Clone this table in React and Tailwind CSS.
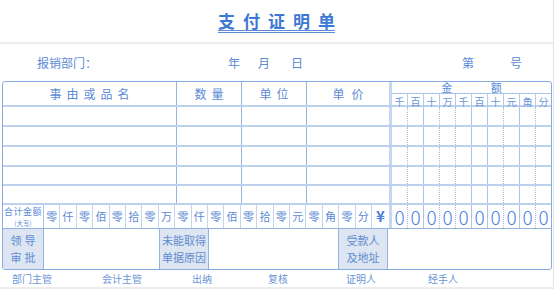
const digits = ["千", "百", "十", "万", "千", "百", "十", "元", "角", "分"]
const daxie = ["零", "仟", "零", "佰", "零", "拾", "零", "万", "零", "仟", "零", "佰", "零", "拾", "零", "元", "零", "角", "零", "分"]
// divider style after each amount cell
const sep = [
  "border-r border-dotted border-[#9fbce6]",
  "border-r border-[#a9c3ea]",
  "border-r border-dotted border-[#9fbce6]",
  "border-r border-dotted border-[#9fbce6]",
  "border-r border-[#a9c3ea]",
  "border-r border-[#a9c3ea]",
  "border-r border-dotted border-[#9fbce6]",
  "border-r border-[#a9c3ea]",
  "border-r border-dotted border-[#9fbce6]",
  "",
]

function AmountCells({ children }) {
  return (
    <div className="w-[162px] flex border-l-[3px] border-[#c6d8f1]">
      {digits.map((d, i) => (
        <div key={i} className={`flex-1 flex items-center justify-center ${sep[i]}`}>
          {children ? children(d, i) : null}
        </div>
      ))}
    </div>
  )
}

export default function App() {
  return (
    <div className="w-[554px] h-[289px] bg-white text-[#5687d4] font-['Noto_Sans_CJK_SC',sans-serif] overflow-hidden border-r border-[#e2e2e2]">
      {/* Title */}
      <div className="h-[42px] flex items-center justify-center pt-[2px]">
        <h1 className="flex gap-[8px] text-[17px] leading-[19px] font-bold text-[#3c78d4] border-b-[3px] border-double border-[#5b8bd8]">
          {["支", "付", "证", "明", "单"].map((c) => (
            <span key={c}>{c}</span>
          ))}
        </h1>
      </div>
      <div className="h-[2px] bg-[#ececec]" />

      {/* Dept / date row */}
      <div className="h-[37px] flex items-center text-[12px] text-[#5b8ad4]">
        <span className="pl-[37px] w-[228px]">报销部门：</span>
        <span className="w-[30px]">年</span>
        <span className="w-[33px]">月</span>
        <span className="w-[171px]">日</span>
        <span className="w-[48px]">第</span>
        <span>号</span>
      </div>

      {/* Table */}
      <div className="ml-[2px] w-[550px] h-[189px] border border-[#86abe0] rounded-[3px] flex flex-col text-[#5b8ad6]">
        {/* header */}
        <div className="h-[25px] flex border-b-2 border-[#bcd1ee] text-[12px]">
          <div className="w-[174px] border-r border-[#93b3e2] flex items-center justify-center tracking-[5px] pl-[5px]">事由或品名</div>
          <div className="w-[65px] border-r border-[#93b3e2] flex items-center justify-center tracking-[5px] pl-[5px]">数量</div>
          <div className="w-[65px] border-r border-[#93b3e2] flex items-center justify-center tracking-[5px] pl-[5px]">单位</div>
          <div className="w-[82px] flex items-center justify-center tracking-[7px] pl-[7px]">单价</div>
          <div className="w-[162px] flex flex-col border-l-[3px] border-[#c6d8f1]">
            <div className="h-[12px] flex items-center justify-around text-[11px] leading-none border-b border-[#a9c3ea] px-[30px]">
              <span>金</span>
              <span>额</span>
            </div>
            <div className="flex-1 flex text-[10px] text-[#6b97d8]">
              {digits.map((d, i) => (
                <div key={i} className={`flex-1 flex items-center justify-center ${i < 9 ? "border-r border-[#b4cbec]" : ""}`}>
                  {d}
                </div>
              ))}
            </div>
          </div>
        </div>

        {/* data rows */}
        {["h-[20px]", "h-[20px]", "h-[20px]", "h-[19px]", "h-[19px]"].map((h, r) => (
          <div key={r} className={`${h} flex border-b-2 border-[#bcd1ee]`}>
            <div className="w-[174px] border-r border-[#93b3e2]" />
            <div className="w-[65px] border-r border-[#93b3e2]" />
            <div className="w-[65px] border-r border-[#93b3e2]" />
            <div className="w-[82px]" />
            <AmountCells />
          </div>
        ))}

        {/* total row */}
        <div className="h-[24px] flex border-b border-[#93b3e2] text-[11px]">
          <div className="w-[41px] border-r border-[#a9c3ea] flex flex-col items-center justify-center whitespace-nowrap">
            <span className="text-[9px] leading-[13px] tracking-[0.5px]">合计金额</span>
            <span className="text-[6.5px] leading-[10px]">(大写)</span>
          </div>
          <div className="w-[328px] grid grid-cols-20">
            {daxie.map((c, i) => (
              <div key={i} className="flex items-center justify-center border-r border-[#c3d5ef]">
                {c}
              </div>
            ))}
          </div>
          <div className="w-[17px] flex items-center justify-center text-[15px] font-bold text-[#4a80d6]">¥</div>
          <AmountCells>
            {() => <span className="text-[19px] font-light text-[#4a80d6] leading-none">0</span>}
          </AmountCells>
        </div>

        {/* signature row */}
        <div className="flex-1 flex text-[11px] leading-[17px] text-[#5f8cd0]">
          <div className="w-[41px] bg-[#dce5f1] border-r border-[#93b3e2] flex flex-col items-center justify-center tracking-[3px] pl-[3px]">
            <span>领导</span>
            <span>审批</span>
          </div>
          <div className="w-[116px] border-r border-[#93b3e2]" />
          <div className="w-[49px] bg-[#dce5f1] border-r border-[#93b3e2] flex flex-col items-center justify-center">
            <span>未能取得</span>
            <span>单据原因</span>
          </div>
          <div className="w-[130px] border-r border-[#93b3e2]" />
          <div className="w-[49px] bg-[#dce5f1] border-r border-[#93b3e2] flex flex-col items-center justify-center">
            <span>受款人</span>
            <span>及地址</span>
          </div>
          <div className="flex-1" />
        </div>
      </div>

      {/* footer */}
      <div className="h-[17px] flex items-center text-[10px] text-[#6a95d6]">
        <span className="pl-[12px] w-[102px]">部门主管</span>
        <span className="w-[90px]">会计主管</span>
        <span className="w-[76px]">出纳</span>
        <span className="w-[78px]">复核</span>
        <span className="w-[82px]">证明人</span>
        <span>经手人</span>
      </div>
      <div className="h-[2px] bg-[#ececec]" />
    </div>
  )
}
